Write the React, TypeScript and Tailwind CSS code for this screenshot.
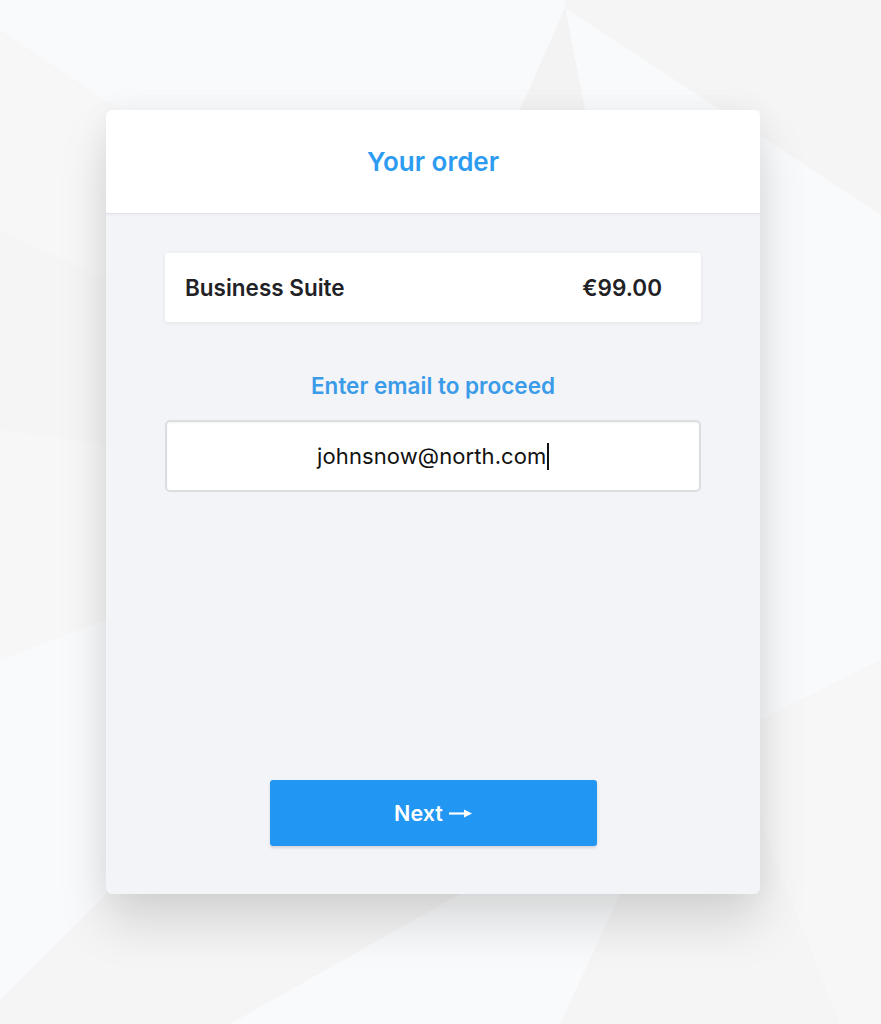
import React from 'react';

const font = { fontFamily: 'Inter, "Noto Sans", sans-serif' };

const Background: React.FC = () => (
    <svg className="absolute inset-0 w-full h-full" viewBox="0 0 881 1024" preserveAspectRatio="none">
        <rect width="881" height="1024" fill="#f5f5f6" />
        <polygon points="0,0 565,0 565,8 470,230 240,190 0,30" fill="#f9fafb" />
        <polygon points="0,30 240,190 106,280 0,230" fill="#f7f7f8" />
        <polygon points="565,8 881,0 881,215" fill="#f5f5f6" />
        <polygon points="565,8 881,215 881,660 760,720 760,110 585,110" fill="#f9fafb" />
        <polygon points="565,8 585,110 520,110" fill="#f3f3f4" />
        <polygon points="0,430 106,445 106,620 0,660" fill="#f7f7f8" />
        <polygon points="0,660 106,620 106,894 0,1000" fill="#f9fafb" />
        <polygon points="760,720 881,660 881,1024 840,1024 760,820" fill="#f7f7f8" />
        <polygon points="230,1024 460,894 620,894 560,1024" fill="#f9fafb" />
    </svg>
);

const App: React.FC = () => {
    return (
        <div className="relative w-[881px] h-[1024px] overflow-hidden" style={font}>
            <Background />
            <div className="relative pt-[110px] pl-[106px]">
                <div className="w-[654px] h-[784px] rounded-md bg-[#f3f4f8] shadow-[0_30px_50px_rgba(0,0,0,0.13),0_0_30px_rgba(0,0,0,0.05)] flex flex-col overflow-hidden">
                    {/* header */}
                    <div className="h-[104px] bg-white flex items-center justify-center border-b border-[#e3e4e8] shadow-[0_1px_2px_rgba(0,0,0,0.04)]">
                        <h1 className="text-[26px] font-semibold text-[#2d9cf0]">Your order</h1>
                    </div>

                    <div className="flex flex-col items-center pt-[39px] flex-1">
                        <div className="w-[536px] h-[69px] bg-white rounded-[3px] shadow-[0_1px_4px_rgba(0,0,0,0.07)] flex items-center justify-between pl-[20px] pr-[39px]">
                            <span className="text-[22.5px] font-semibold text-[#222226]">Business Suite</span>
                            <span className="text-[22.5px] font-semibold text-[#222226]">€99.00</span>
                        </div>

                        <p className="mt-[50px] h-[28px] leading-[28px] text-[22.5px] font-semibold text-[#3a9be8]">Enter email to proceed</p>

                        <div className="mt-[20px] w-[536px] h-[72px] bg-white rounded-[5px] border-2 border-[#dcdde0] shadow-[inset_0_1px_2px_rgba(0,0,0,0.05)] flex items-center justify-center">
                            <span className="text-[22px] text-[#111] tracking-[0.1px]">johnsnow@north.com</span>
                            <span className="w-[1.5px] h-[27px] bg-[#111] ml-[1px]"></span>
                        </div>

                        <button className="mt-[288px] w-[327px] h-[66px] rounded-[3px] bg-[#2196f3] shadow-[0_2px_3px_rgba(0,0,0,0.12)] flex items-center justify-center gap-[6px] text-white text-[21.5px] font-semibold">
                            Next
                            <svg width="23" height="11" viewBox="0 0 23 11">
                                <line x1="0" y1="5.5" x2="16" y2="5.5" stroke="white" strokeWidth="2.2" />
                                <polygon points="15,1.5 23,5.5 15,9.5" fill="white" />
                            </svg>
                        </button>
                    </div>
                </div>
            </div>
        </div>
    );
};

export default App;
